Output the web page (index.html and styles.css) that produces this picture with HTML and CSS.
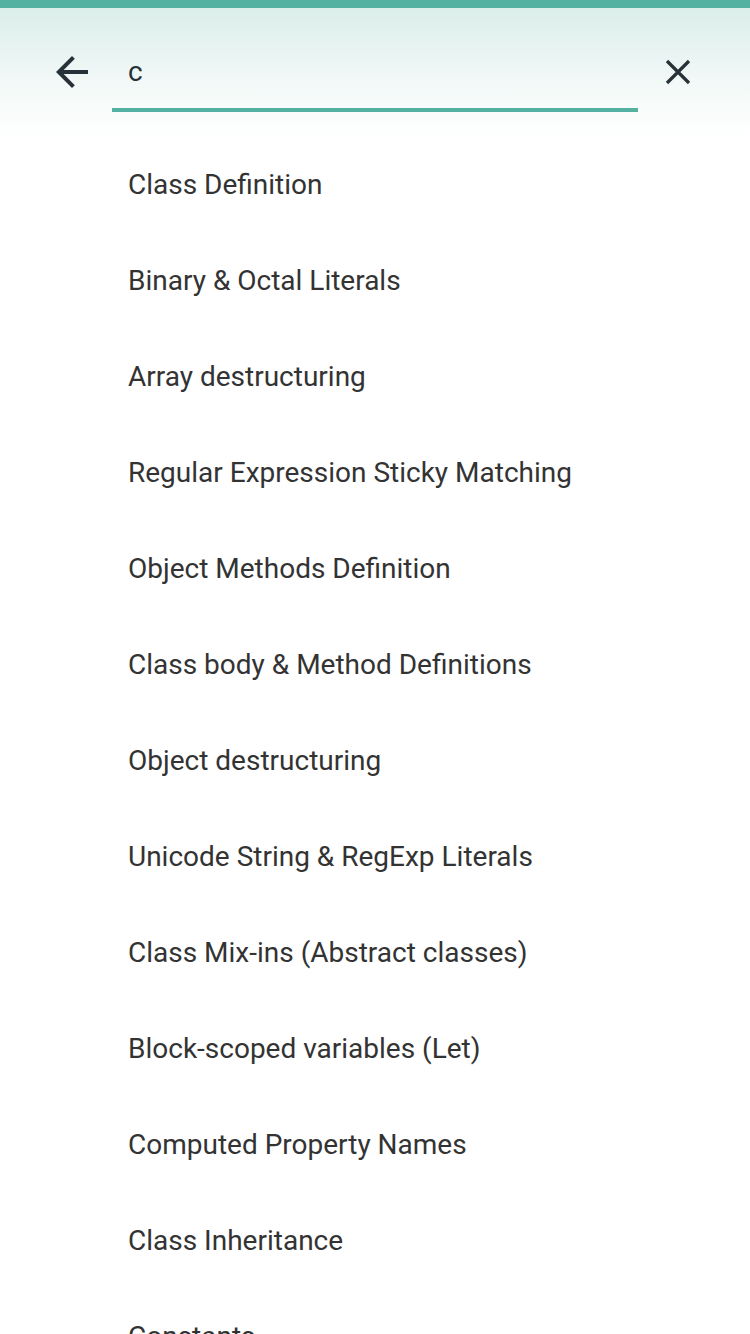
FILE: index.html
```html
<!DOCTYPE html>
<html lang="en">
<head>
<meta charset="utf-8">
<meta name="viewport" content="width=750">
<title>Search</title>
<link rel="stylesheet" href="styles.css">
</head>
<body>
<div class="page">
  <header class="search-header">
    <button class="icon-btn back" aria-label="Back">
      <svg viewBox="0 0 24 24" width="48" height="48"><path d="M20 11H7.83l5.59-5.59L12 4l-8 8 8 8 1.41-1.41L7.83 13H20v-2z" fill="#263238"/></svg>
    </button>
    <div class="field">
      <span class="query">c</span>
    </div>
    <button class="icon-btn close" aria-label="Clear">
      <svg viewBox="0 0 48 48" width="48" height="48"><path d="M13 13L35 35M35 13L13 35" fill="none" stroke="#263238" stroke-width="3.2" stroke-linecap="butt"/></svg>
    </button>
  </header>
  <ul class="results">
    <li>Class Definition</li>
    <li>Binary &amp; Octal Literals</li>
    <li>Array destructuring</li>
    <li>Regular Expression Sticky Matching</li>
    <li>Object Methods Definition</li>
    <li>Class body &amp; Method Definitions</li>
    <li>Object destructuring</li>
    <li>Unicode String &amp; RegExp Literals</li>
    <li>Class Mix-ins (Abstract classes)</li>
    <li>Block-scoped variables (Let)</li>
    <li>Computed Property Names</li>
    <li>Class Inheritance</li>
    <li>Constants</li>
  </ul>
</div>
</body>
</html>
```
FILE: styles.css
```css
* { box-sizing: border-box; }
html, body {
  margin: 0;
  padding: 0;
  background: #ffffff;
}
body {
  font-family: Roboto, "Liberation Sans", Arial, sans-serif;
  color: #333333;
  overflow: hidden;
  height: 1334px;
}
.page {
  width: 750px;
}
.search-header {
  border-top: 8px solid #52b1a1;
  height: 137px;
  background: linear-gradient(to bottom, #dbeeea 0%, #f3f9f8 60%, #ffffff 100%);
  display: flex;
  align-items: flex-start;
  padding: 40px 48px 0 48px;
}
.icon-btn {
  width: 48px;
  height: 48px;
  padding: 0;
  border: 0;
  background: transparent;
  display: flex;
  align-items: center;
  justify-content: center;
  flex: none;
}
.field {
  flex: 1;
  margin: 0 12px 0 16px;
  height: 64px;
  border-bottom: 4px solid #52b1a1;
  display: flex;
  align-items: flex-start;
  padding-left: 16px;
}
.query {
  font-size: 28px;
  line-height: 48px;
  color: #263238;
}
.close {
  margin-left: 4px;
  margin-right: 0;
}
.results {
  list-style: none;
  margin: 0;
  padding: 0;
}
.results li {
  height: 96px;
  line-height: 96px;
  padding-left: 128px;
  font-size: 28px;
  color: #333333;
  white-space: nowrap;
}
```
